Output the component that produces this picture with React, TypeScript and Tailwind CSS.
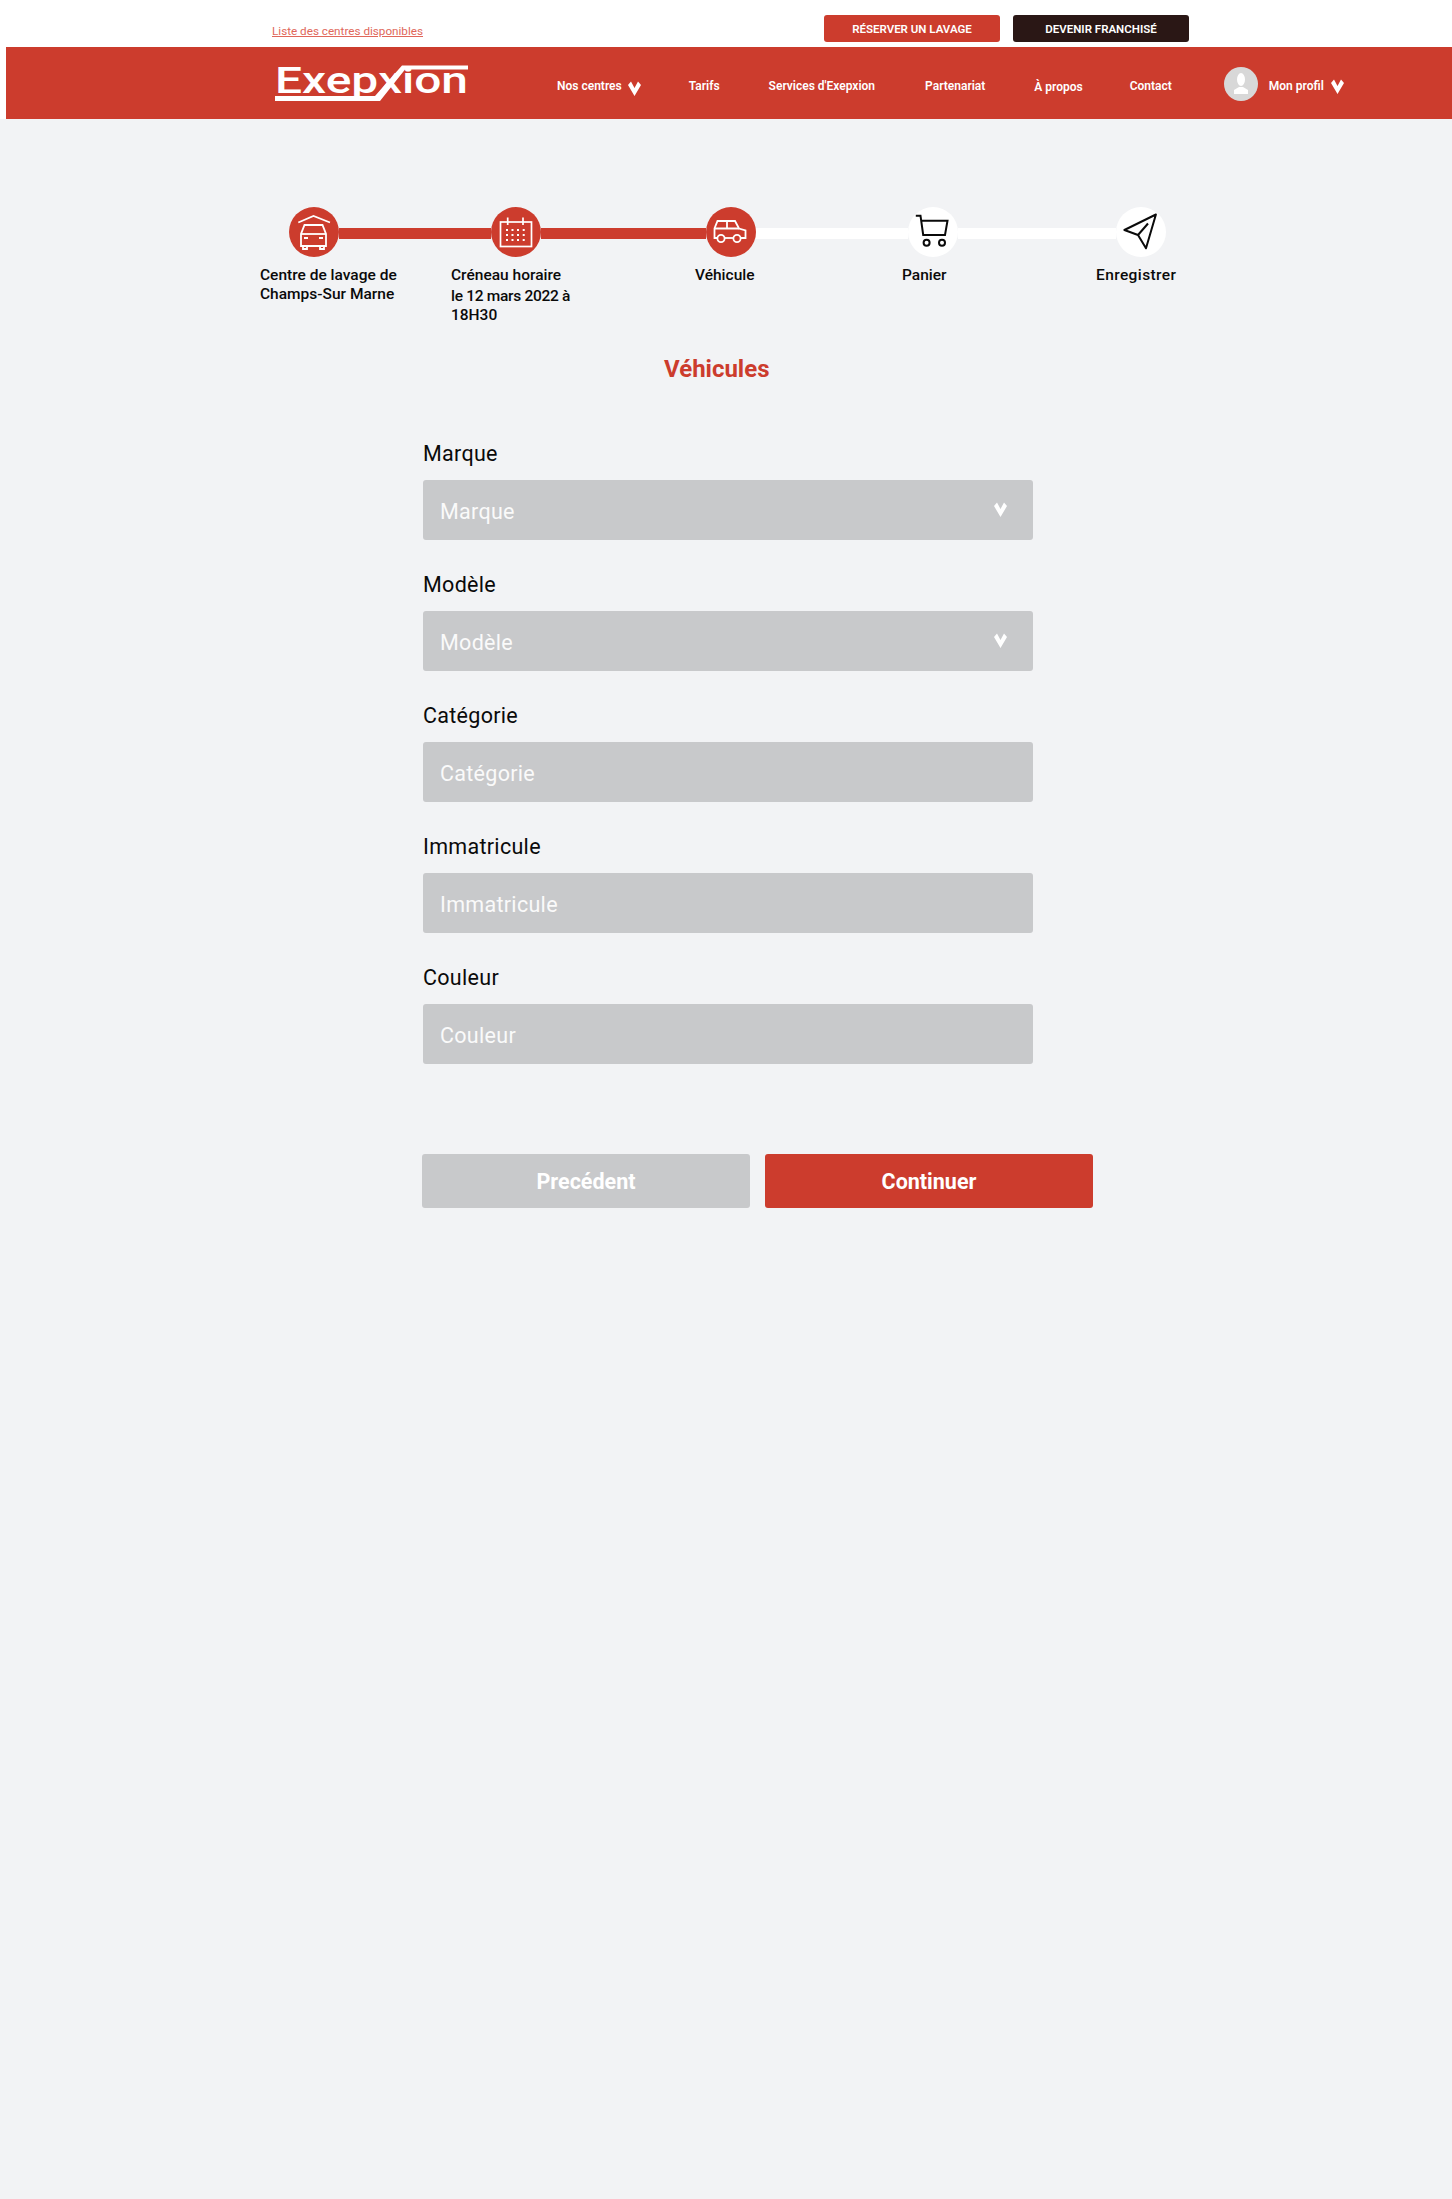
import React from "react";

function Chev({ className }: { className: string }) {
  return (
    <svg viewBox="0 0 13 15" className={className} fill="#fff">
      <path d="M0 4 L3 0.5 L6.5 7 L10 0.5 L13 4 L6.5 15 Z" />
    </svg>
  );
}

function Logo() {
  return (
    <svg viewBox="0 0 194 38" className="w-[194px] h-[38px] shrink-0 overflow-visible">
      <text x="0" y="29" fontFamily="Roboto, sans-serif" fontWeight="500" fontSize="37" fill="#fff" textLength="193" lengthAdjust="spacingAndGlyphs">Exepxion</text>
      <path d="M0 32 H100 L127 1.5 H193 V5.5 H130 L105 37 H0 Z" fill="#fff" />
    </svg>
  );
}

function Avatar() {
  return (
    <svg viewBox="0 0 34 34" className="w-[34px] h-[34px] shrink-0">
      <circle cx="17" cy="17" r="17" fill="#d8d8d8" />
      <ellipse cx="17" cy="12.5" rx="4" ry="6.5" fill="#fff" />
      <path d="M10 27 V23 L15 20 H19 L24 23 V27 Z" fill="#fff" />
    </svg>
  );
}

function CarIcon() {
  return (
    <svg viewBox="0 0 50 50" className="w-full h-full" fill="none" stroke="#fff" strokeWidth="1.8">
      <path d="M9.3 15.5 L24.5 9 L41 15.5" />
      <path d="M12 39 V27 L15.5 18 H33.5 L37 27 V39 Z" />
      <path d="M12 27 H37" />
      <path d="M14 39 V42 H18 V39 M31 39 V42 H35 V39" />
      <path d="M15 31 H19 M30 31 H34" />
    </svg>
  );
}

function CalendarIcon() {
  const xs = [16, 21.5, 27, 32.7];
  const ys = [23, 28, 33];
  return (
    <svg viewBox="0 0 50 50" className="w-full h-full" fill="none" stroke="#fff" strokeWidth="1.7">
      <rect x="9.5" y="15" width="31" height="24.5" />
      <path d="M16.7 10.5 V18 M32 10.5 V18" />
      {ys.map((y) => xs.map((x) => <rect key={`${x}-${y}`} x={x - 1} y={y - 1} width="2" height="2" fill="#fff" stroke="none" />))}
    </svg>
  );
}

function SuvIcon() {
  return (
    <svg viewBox="0 0 50 50" className="w-full h-full" fill="none" stroke="#fff" strokeWidth="1.8">
      <path d="M11 31 H8.5 V21.5 L11.5 14 H29 L33 21.5 L39.5 23.5 V31 H35" />
      <path d="M19 31 H27" />
      <path d="M8.5 21.5 H33 M21 14 V21.5" />
      <circle cx="15" cy="31.5" r="3.6" />
      <circle cx="31" cy="31.5" r="3.6" />
    </svg>
  );
}

function CartIcon() {
  return (
    <svg viewBox="0 0 50 50" className="w-full h-full" fill="none" stroke="#0a0a0a" strokeWidth="2">
      <path d="M7.8 8.7 H12.5 L15.2 28 H37 L39.5 13.7 H13.5" />
      <circle cx="18.6" cy="35.7" r="3" />
      <circle cx="34" cy="35.7" r="3" />
    </svg>
  );
}

function SendIcon() {
  return (
    <svg viewBox="0 0 50 50" className="w-full h-full" fill="none" stroke="#0a0a0a" strokeWidth="2" strokeLinejoin="round">
      <path d="M39.9 7.5 L8.4 23 L22 28 L30 41.3 Z" />
      <path d="M22 28 L32 16.5" />
    </svg>
  );
}

function Step({ bg, children }: { bg: string; children: React.ReactNode }) {
  return <div className={`w-[50px] h-[50px] rounded-full shrink-0 relative ${bg}`}>{children}</div>;
}

function Field({ label, select }: { label: string; select?: boolean }) {
  return (
    <div className="flex flex-col">
      <label className="h-[27px] text-[21.5px] leading-[27px] tracking-[0.3px] text-[#0a0a0a]">{label}</label>
      <div className="relative mt-[13px] w-[610px] h-[60px]">
        <input
          placeholder={label}
          className="w-full h-full rounded-[3px] bg-[#c8c9cb] pl-[17px] pr-10 pt-[2px] text-[21.5px] tracking-[0.3px] outline-none placeholder:text-[#fafafa]"
        />
        {select && <Chev className="absolute left-[571px] top-[22px] w-[13px] h-[15px]" />}
      </div>
    </div>
  );
}

export default function App() {
  return (
    <div className="min-h-screen bg-[#f2f3f5] font-['Roboto',sans-serif]">
      <div className="bg-white">
        <div className="flex h-[47px] pl-[272px]">
          <a className="mt-[23px] w-[552px] text-[11.7px] leading-[16px] text-[#e0675a] underline">Liste des centres disponibles</a>
          <div className="flex mt-[15px] h-[27px] gap-[13px]">
            <button className="w-[176px] rounded-[3px] bg-[#cc3c2d] pt-[2px] text-[11.5px] font-semibold text-white">RÉSERVER UN LAVAGE</button>
            <button className="w-[176px] rounded-[3px] bg-[#2a1715] pt-[2px] text-[11.5px] font-semibold text-white">DEVENIR FRANCHISÉ</button>
          </div>
        </div>
        <div className="ml-[6px] flex h-[72px] items-center bg-[#cc3c2d] pl-[269px] text-[12px] font-semibold text-white">
          <Logo />
          <span className="ml-[88px] mt-[6px]">Nos centres</span>
          <Chev className="ml-[6px] mt-[10px] w-[13px] h-[15px]" />
          <span className="ml-[48px] mt-[6px]">Tarifs</span>
          <span className="ml-[49px] mt-[6px]">Services d'Exepxion</span>
          <span className="ml-[50px] mt-[6px]">Partenariat</span>
          <span className="ml-[49px] mt-[8px]">À propos</span>
          <span className="ml-[47px] mt-[6px]">Contact</span>
          <div className="ml-[52px] mt-[2px]"><Avatar /></div>
          <span className="ml-[11px] mt-[6px]">Mon profil</span>
          <Chev className="ml-[7px] mt-[6px] w-[13px] h-[15px]" />
        </div>
      </div>

      <div className="pt-[88px] pl-[289px] flex items-center">
        <Step bg="bg-[#cc3c2d]"><CarIcon /></Step>
        <div className="w-[152px] h-[11px] mt-[3px] bg-[#cc3c2d]" />
        <Step bg="bg-[#cc3c2d]"><CalendarIcon /></Step>
        <div className="w-[165px] h-[11px] mt-[3px] bg-[#cc3c2d]" />
        <Step bg="bg-[#cc3c2d]"><SuvIcon /></Step>
        <div className="w-[152px] h-[11px] mt-[3px] bg-white" />
        <Step bg="bg-white"><CartIcon /></Step>
        <div className="w-[158px] h-[11px] mt-[3px] bg-white" />
        <Step bg="bg-white"><SendIcon /></Step>
      </div>

      <div className="mt-[9px] flex h-[67px] pl-[260px] text-[15.5px] font-medium leading-[19px] text-[#0a0a0a]">
        <div className="w-[191px]">Centre de lavage de<br />Champs-Sur Marne</div>
        <div className="w-[244px]">Créneau horaire<br /><span className="mt-[2px] block tracking-[-0.3px]">le 12 mars 2022 à</span>18H30</div>
        <div className="w-[207px]">Véhicule</div>
        <div className="w-[194px]">Panier</div>
        <div className="tracking-[0.4px]">Enregistrer</div>
      </div>

      <h1 className="mt-[21px] pl-[664px] text-[24px] font-bold leading-[30px] text-[#cc3c2d]">Véhicules</h1>

      <form className="mt-[56px] ml-[423px] flex flex-col gap-[31px]">
        <Field label="Marque" select />
        <Field label="Modèle" select />
        <Field label="Catégorie" />
        <Field label="Immatricule" />
        <Field label="Couleur" />
      </form>

      <div className="mt-[90px] ml-[422px] flex gap-[15px]">
        <button className="w-[328px] h-[54px] rounded-[3px] bg-[#c8c9cb] pt-[3px] text-[21.5px] font-bold text-white">Precédent</button>
        <button className="w-[328px] h-[54px] rounded-[3px] bg-[#cc3c2d] pt-[3px] text-[21.5px] font-bold text-white">Continuer</button>
      </div>
    </div>
  );
}
